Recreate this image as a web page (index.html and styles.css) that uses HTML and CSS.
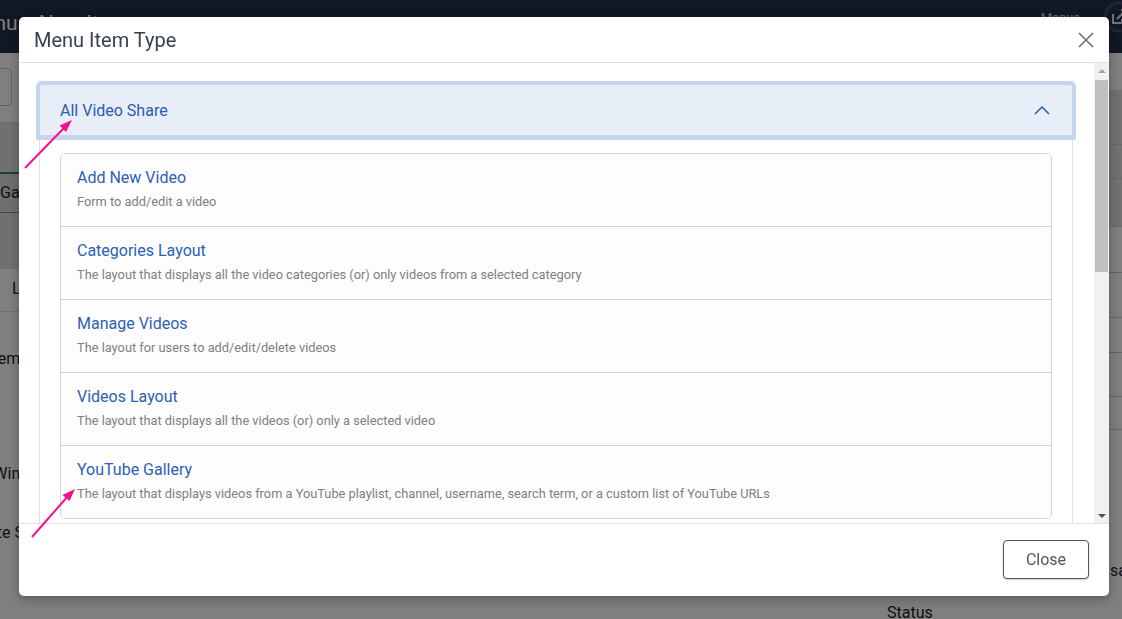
FILE: index.html
```html
<!DOCTYPE html>
<html lang="en">

<head>
    <meta charset="UTF-8">
    <meta name="viewport" content="width=device-width, initial-scale=1.0">
    <title>Menus: New Item</title>
    <link rel="stylesheet" href="styles.css">
</head>

<body>
    <div class="page">
        <header class="topbar">
            <h1 class="page-title">Menus: New Item</h1>
            <div class="topbar-tools">
                <span class="top-link">Menus</span>
                <svg class="site-icon" width="34" height="34" viewBox="0 0 34 34">
                    <circle cx="17" cy="17" r="14" fill="none" stroke="#3d4a66" stroke-width="3" />
                    <path d="M11 14v9h9v-4M15 19l9-9M19 10h5v5" fill="none" stroke="#e6e8ec" stroke-width="2" />
                </svg>
            </div>
        </header>
        <div class="workspace">
            <div class="main">
                <div class="subhead">
                    <span class="field-box"></span>
                </div>
                <div class="tabs-band">
                    <span class="tab">YouTube Gallery</span>
                </div>
                <div class="tab-row">
                    <span class="tab-link">Link Type</span>
                </div>
                <div class="form-list">
                    <div class="form-row tall"><span class="label">Menu Item</span></div>
                    <div class="form-row"><span class="label">Target Window</span></div>
                    <div class="form-row"><span class="label">Template Style</span></div>
                </div>
            </div>
            <div class="side">
                <div></div>
                <div class="side-row shaded"></div>
                <div class="side-row shaded"></div>
                <div class="side-row shaded"></div>
                <div class="side-row"></div>
                <div class="side-row"></div>
                <div class="side-row"></div>
                <div class="side-row"></div>
                <div class="side-row"></div>
                <div class="side-field"><span>Menu</span><span>sample</span></div>
                <div class="side-label">Status</div>
            </div>
        </div>
    </div>

    <div class="modal-backdrop"></div>

    <div class="modal">
        <div class="modal-header">
            <h3 class="modal-title">Menu Item Type</h3>
            <button class="btn-close">
                <svg width="16" height="16" viewBox="0 0 16 16">
                    <path d="M1 1l14 14M15 1L1 15" stroke="#707070" stroke-width="1.6" />
                </svg>
            </button>
        </div>
        <div class="modal-body">
            <div class="body-scroll">
                <div class="accordion">
                    <div class="accordion-item open">
                        <button class="accordion-button">
                            <span>All Video Share</span>
                            <svg width="16" height="10" viewBox="0 0 16 10">
                                <path d="M1 9l7-7 7 7" fill="none" stroke="#2b5cad" stroke-width="1.5" />
                            </svg>
                        </button>
                        <div class="accordion-body">
                            <div class="list-group">
                                <a class="list-group-item" href="#">
                                    <span class="item-title">Add New Video</span>
                                    <small class="item-desc">Form to add/edit a video</small>
                                </a>
                                <a class="list-group-item" href="#">
                                    <span class="item-title">Categories Layout</span>
                                    <small class="item-desc">The layout that displays all the video categories (or) only videos from a selected category</small>
                                </a>
                                <a class="list-group-item" href="#">
                                    <span class="item-title">Manage Videos</span>
                                    <small class="item-desc">The layout for users to add/edit/delete videos</small>
                                </a>
                                <a class="list-group-item" href="#">
                                    <span class="item-title">Videos Layout</span>
                                    <small class="item-desc">The layout that displays all the videos (or) only a selected video</small>
                                </a>
                                <a class="list-group-item" href="#">
                                    <span class="item-title">YouTube Gallery</span>
                                    <small class="item-desc">The layout that displays videos from a YouTube playlist, channel, username, search term, or a custom list of YouTube URLs</small>
                                </a>
                            </div>
                        </div>
                    </div>
                    <div class="accordion-item"><button class="accordion-button">Articles</button></div>
                    <div class="accordion-item"><button class="accordion-button">Configuration Manager</button></div>
                    <div class="accordion-item"><button class="accordion-button">Contacts</button></div>
                </div>
            </div>
            <!-- classic scrollbar of the list frame -->
            <div class="scrollbar">
                <span class="sb-btn up"></span>
                <div class="sb-track"><span class="sb-thumb"></span></div>
                <span class="sb-btn down"></span>
            </div>
        </div>
        <div class="modal-footer">
            <button class="btn">Close</button>
        </div>
    </div>

    <!-- pointer arrows drawn over the dialog -->
    <svg class="pointers" width="1122" height="619" viewBox="0 0 1122 619">
        <line x1="25" y1="168" x2="65" y2="127" stroke="#f7108b" stroke-width="2" />
        <polygon points="72,120 66,132 59.5,125.5" fill="#f7108b" />
        <line x1="32" y1="537" x2="68" y2="496" stroke="#f7108b" stroke-width="2" />
        <polygon points="75,489 69.5,501 62.5,495" fill="#f7108b" />
    </svg>
</body>
</html>
```

FILE: styles.css
```css
* {
    margin: 0;
    box-sizing: border-box;
    padding: 0;
}

body {
    width: 1122px;
    height: 619px;
    overflow: hidden;
    font-family: Roboto, "Liberation Sans", sans-serif;
    color: #22262a;
    background: #fff;
}

/* page behind the dialog */

.page {
    height: 619px;
    display: flex;
    flex-direction: column;
}

.topbar {
    height: 53px;
    flex-shrink: 0;
    display: flex;
    justify-content: space-between;
    background: #222f4b;
}

.page-title {
    margin: 10px 0 0 -35px;
    font-size: 21px;
    font-weight: 400;
    line-height: 26px;
    color: #fff;
}

.topbar-tools {
    display: flex;
    align-items: flex-start;
    gap: 22px;
    margin-right: -14px;
}

.top-link {
    margin-top: 10px;
    font-size: 13px;
    color: #cfd3da;
}

.workspace {
    flex: 1;
    display: grid;
    grid-template-columns: 1fr 250px;
}

.subhead {
    height: 69px;
    padding-top: 15px;
}

.field-box {
    display: block;
    width: 24px;
    height: 38px;
    margin-left: -12px;
    border: 1px solid #c3c7cd;
    border-radius: 4px;
}

.tabs-band {
    height: 147px;
    padding-top: 49px;
    background: #e0e1e3;
    border-top: 1px solid #cfd1d4;
}

.tab {
    display: block;
    width: 190px;
    height: 41px;
    margin-left: -66px;
    font-size: 16px;
    line-height: 38px;
    color: #222;
    border-top: 2px solid #4d7a5c;
    border-bottom: 1px solid #8d9096;
    background: #dedfe3;
}

.tab-row {
    height: 43px;
    padding: 10px 0 0 12px;
    border-bottom: 1px solid #dcdee1;
}

.tab-link {
    font-size: 16px;
    line-height: 20px;
}

.form-list {
    padding-top: 37px;
}

.form-row {
    height: 59px;
    margin-left: -56px;
}

.form-row.tall {
    height: 115px;
}

.label {
    font-size: 16px;
    line-height: 20px;
    color: #222;
}

.side {
    display: grid;
    grid-template-rows: 37px 55px 34px 48px 46px 45px 35px 44px 33px 160px auto;
}

.side-row {
    border-bottom: 1px solid #c9ccd0;
}

.side-row.shaded {
    background: #e2e3e6;
}

.side-field {
    display: grid;
    grid-template-columns: 238px auto;
    padding-top: 131px;
    font-size: 16px;
    line-height: 20px;
    color: #222;
}

.side-label {
    padding: 13px 0 0 15px;
    font-size: 16px;
    line-height: 20px;
    color: #222;
}

.modal-backdrop {
    position: fixed;
    inset: 0;
    background: rgba(0, 0, 0, .5);
}

/* dialog */

.modal {
    position: fixed;
    left: 19px;
    top: 17px;
    width: 1090px;
    height: 579px;
    display: flex;
    flex-direction: column;
    overflow: hidden;
    background: #fff;
    border-radius: 5px;
    box-shadow: 0 3px 12px rgba(0, 0, 0, .3);
}

.modal-header {
    height: 46px;
    flex-shrink: 0;
    display: flex;
    align-items: center;
    justify-content: space-between;
    padding: 0 15px;
    border-bottom: 1px solid #dfe2e6;
}

.modal-title {
    font-size: 20px;
    font-weight: 400;
    color: #394150;
}

.btn-close {
    display: flex;
    border: 0;
    background: none;
}

.modal-body {
    height: 460px;
    flex-shrink: 0;
    display: flex;
}

.body-scroll {
    flex: 1;
    overflow: hidden;
    padding: 18px 21px 0 20px;
}

.scrollbar {
    width: 15px;
    display: flex;
    flex-direction: column;
    background: #f1f1f1;
}

.sb-btn {
    height: 15px;
    display: flex;
    align-items: center;
    justify-content: center;
}

.sb-btn::after {
    content: "";
    border-left: 4px solid transparent;
    border-right: 4px solid transparent;
}

.sb-btn.up::after {
    border-bottom: 4px solid #a3a3a3;
}

.sb-btn.down::after {
    border-top: 4px solid #505050;
}

.sb-track {
    flex: 1;
    padding: 2px 1px 0;
}

.sb-thumb {
    display: block;
    height: 192px;
    background: #c1c1c1;
}

.accordion-item {
    border: 1px solid #dcdfe4;
    border-top: 0;
}

.accordion-button {
    display: flex;
    align-items: center;
    justify-content: space-between;
    width: 100%;
    height: 54px;
    padding: 0 22px 0 20px;
    font-family: inherit;
    font-size: 16px;
    text-align: left;
    color: #2b5cad;
    background: #fff;
    border: 0;
}

.open .accordion-button {
    width: calc(100% + 8px);
    height: 59px;
    margin: 0 -4px;
    background: #e8eef7;
    border: 4px solid #c6d5ec;
    border-bottom-width: 5px;
    border-radius: 6px 6px 0 0;
}

.accordion-body {
    padding: 13px 20px 15px;
}

.list-group {
    display: flex;
    flex-direction: column;
    border: 1px solid #c9d6e8;
    border-radius: 5px;
    overflow: hidden;
}

.list-group-item {
    display: flex;
    flex-direction: column;
    height: 73px;
    padding: 12px 16px 0;
    text-decoration: none;
    background: #fdfdfd;
    border-bottom: 1px solid #c9d6e8;
}

.list-group-item:last-child {
    height: 72px;
    border-bottom: 0;
}

.item-title {
    font-size: 16px;
    line-height: 24px;
    color: #2d5fb5;
}

.item-desc {
    margin-top: 2px;
    font-size: 12.8px;
    line-height: 20px;
    color: #808080;
}

.modal-footer {
    flex: 1;
    display: flex;
    justify-content: flex-end;
    align-items: flex-start;
    padding: 16px 20px 0;
    border-top: 1px solid #dee2e6;
}

.btn {
    width: 86px;
    height: 39px;
    font-family: inherit;
    font-size: 16px;
    color: #4c5560;
    background: #fff;
    border: 1px solid #4f5358;
    border-radius: 4px;
    box-shadow: 0 1px 2px rgba(0, 0, 0, .2);
}

.pointers {
    position: fixed;
    left: 0;
    top: 0;
    pointer-events: none;
}
```
